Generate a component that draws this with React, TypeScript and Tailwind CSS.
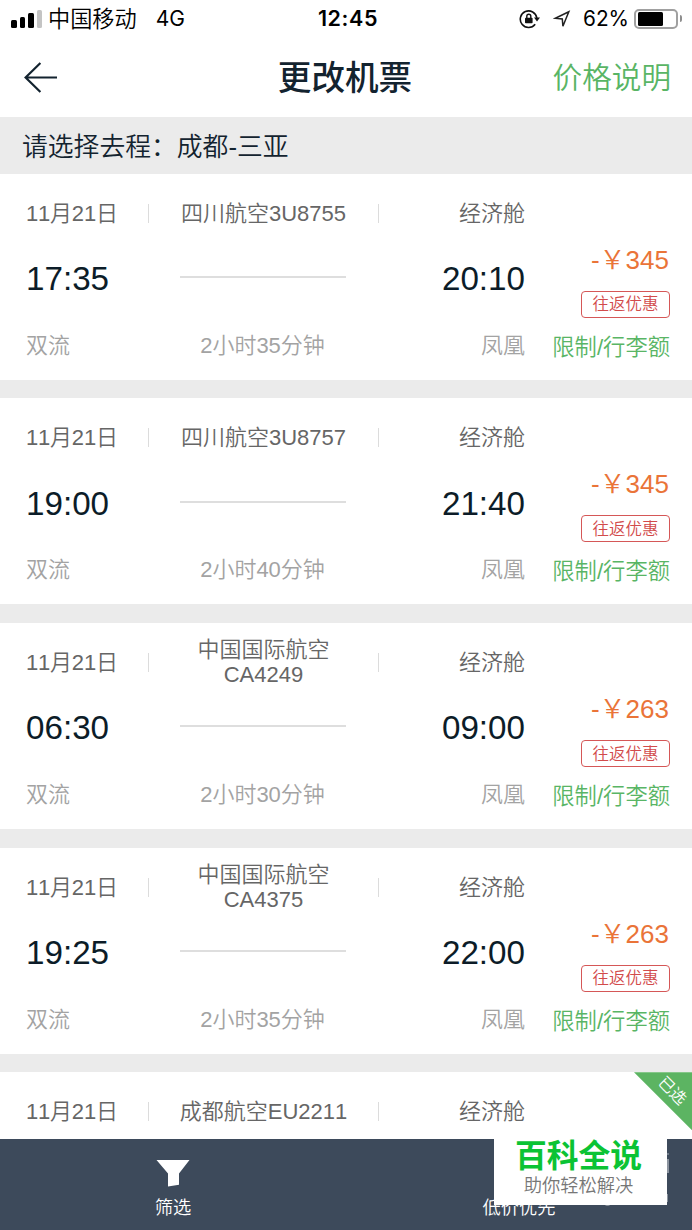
import React from "react";

interface Flight {
  airline: string;
  code: string;
  stacked?: boolean;
  depart?: string;
  arrive?: string;
  duration?: string;
  price?: string;
  selected?: boolean;
}

const flights: Flight[] = [
  { airline: "四川航空", code: "3U8755", depart: "17:35", arrive: "20:10", duration: "2小时35分钟", price: "345" },
  { airline: "四川航空", code: "3U8757", depart: "19:00", arrive: "21:40", duration: "2小时40分钟", price: "345" },
  { airline: "中国国际航空", code: "CA4249", stacked: true, depart: "06:30", arrive: "09:00", duration: "2小时30分钟", price: "263" },
  { airline: "中国国际航空", code: "CA4375", stacked: true, depart: "19:25", arrive: "22:00", duration: "2小时35分钟", price: "263" },
  { airline: "成都航空", code: "EU2211", selected: true },
];

const StatusBar: React.FC = () => (
  <div className="flex h-[38px] items-center justify-between pl-[11px] pr-[10px] text-[22px] text-black">
    <div className="flex w-[260px] items-center">
      <div className="flex items-end gap-[3px]">
        <span className="h-2 w-[5.5px] rounded-[1.5px] bg-black" />
        <span className="h-[11px] w-[5.5px] rounded-[1.5px] bg-black" />
        <span className="h-[14.5px] w-[5.5px] rounded-[1.5px] bg-black" />
        <span className="h-[18px] w-[5.5px] rounded-[1.5px] bg-[#c4c4c4]" />
      </div>
      <span className="ml-[6px] pt-[3px] text-[22.2px] font-[350] leading-none">中国移动</span>
      <span className="ml-[19px] font-['Inter'] text-[21px] leading-none">4G</span>
    </div>
    <span className="ml-[3px] font-['Inter'] text-[21.5px] font-semibold leading-none tracking-[0.6px]">12:45</span>
    <div className="flex w-[260px] items-center justify-end">
      {/* Rotation lock */}
      <svg width="22" height="20" viewBox="0 0 22 20" fill="none" stroke="#111" strokeWidth="1.6">
        <path d="M16.2 15.2A8.3 8.3 0 1 1 17.8 9" />
        <path d="M15 8.6h6l-3 3.8z" fill="#111" stroke="none" />
        <rect x="6" y="8.8" width="7.6" height="5.4" rx=".8" fill="#111" stroke="none" />
        <path d="M7.8 9.4V7.3a2 2 0 0 1 4 0v2.1" strokeWidth="1.4" />
      </svg>
      {/* Location */}
      <svg className="ml-3" width="18" height="18" viewBox="0 0 18 18" fill="none" stroke="#222" strokeWidth="1.5" strokeLinejoin="miter">
        <path d="M15.8 1.8 2.4 8.2l6.9.7.6 7.3z" />
      </svg>
      <span className="ml-3 font-['Inter'] text-[20.8px] leading-none">62%</span>
      <div className="ml-[5px] flex items-center gap-[1.5px]">
        <div className="flex h-[20.5px] w-[44px] rounded-[5px] border-2 border-[#a0a0a0] p-[1.5px]">
          <div className="w-[25px] rounded-[1.5px] bg-black" />
        </div>
        <div className="h-[7px] w-[2.5px] rounded-r-full bg-[#8e8e8e]" />
      </div>
    </div>
  </div>
);

const Header: React.FC = () => (
  <div className="flex h-[79px] items-center justify-between pl-6 pr-5 text-[#13232f]">
    <div className="w-[174px]">
      <svg width="34" height="32" viewBox="0 0 34 32" fill="none" stroke="#13232f" strokeWidth="2.2">
        <path d="M33 15.5H2M16.4 1 1.6 15.5 16.4 30" />
      </svg>
    </div>
    <h1 className="pt-[3px] text-[33.6px] font-medium leading-none">更改机票</h1>
    <span className="w-[180px] pr-px text-right text-[29.6px] font-[350] leading-none text-[#59b565]">价格说明</span>
  </div>
);

const FlightCard: React.FC<{ flight: Flight }> = ({ flight }) => (
  <div className="relative flex h-[206.2px] shrink-0 bg-white pl-[26px] font-[350]">
    {/* Trip details */}
    <div className="w-[499px]">
      <div className="flex h-[79px] items-center text-[22px] text-[#666]">
        <span className="w-[122px] tracking-[-0.2px]">11月21日</span>
        <span className="h-[19px] w-px bg-[#dcdcdc]" />
        <span className="w-[229px] text-center leading-[25px]">
          {flight.airline}
          {flight.stacked && <br />}
          {flight.code}
        </span>
        <span className="h-[19px] w-px bg-[#dcdcdc]" />
        <span className="flex-1 text-right">经济舱</span>
      </div>
      {flight.depart && (
        <div className="flex h-[52px] items-center justify-between text-[33.2px] leading-none text-[#0c1c28]">
          <span className="w-[154px]">{flight.depart}</span>
          <span className="mb-[3px] h-[2px] w-[166px] bg-[#dedede]" />
          <span className="w-[179px] text-right">{flight.arrive}</span>
        </div>
      )}
      {flight.duration && (
        <div className="flex h-[82px] items-center text-[22px] leading-none text-[#a3a3a3]">
          <span className="w-[122px]">双流</span>
          <span className="w-[229px] text-center">{flight.duration}</span>
          <span className="flex-1 text-right">凤凰</span>
        </div>
      )}
    </div>
    {/* Price */}
    {flight.price && (
      <div className="flex w-[145px] flex-col items-end pt-[69px]">
        <span className="h-[34px] whitespace-nowrap pr-px text-[26px] leading-[34px] text-[#ea7438]">-￥{flight.price}</span>
        <span className="mt-[14px] flex h-[27px] w-[89px] items-center justify-center rounded-[4px] border border-[#d55757] pt-px text-[16.5px] leading-none text-[#d24b4b]">
          往返优惠
        </span>
        <span className="mt-[14px] whitespace-nowrap text-[22.3px] leading-[32px] text-[#59b565]">限制/行李额</span>
      </div>
    )}
    {flight.selected && (
      <div className="absolute right-0 top-0 h-[58px] w-[58px] bg-[#5cb462] [clip-path:polygon(0_0,100%_0,100%_100%)]">
        <span className="absolute left-[22px] top-[11px] rotate-45 whitespace-nowrap text-[16px] leading-none text-white">已选</span>
      </div>
    )}
  </div>
);

const BottomBar: React.FC = () => (
  <div className="relative flex h-[91px] shrink-0 bg-[#3d4a5b] text-[18.3px] leading-none text-white">
    <div className="flex w-1/2 flex-col items-center pt-[21px]">
      <svg width="34" height="27" viewBox="0 0 34 27" fill="#fff">
        <path d="M.5 0h33L23 13.5v11.3L12 26.5v-13z" />
      </svg>
      <span className="mt-[12px] font-[350]">筛选</span>
    </div>
    <div className="flex w-1/2 flex-col items-center pt-[60px]">
      <span className="font-[350]">低价优先</span>
    </div>
    {/* Brand plate over the bar */}
    <span className="absolute left-[603px] top-[58px] h-[9px] w-[9px] rounded-full border-[1.5px] border-[#a2a9b1]" />
    <span className="absolute left-[663px] top-[14px] h-[1.5px] w-[6px] bg-[#6f7a88]" />
    <span className="absolute left-[667px] top-[20px] h-[14px] w-[1.5px] bg-[#8b939e]" />
    <span className="absolute left-[666px] top-[55px] h-[8px] w-[2px] bg-[#8b939e]" />
    <div className="absolute left-[494px] top-0 flex h-[66px] w-[173px] flex-col items-center bg-white">
      <span className="mr-[4px] mt-[1px] text-[31.8px] font-bold leading-[33px] text-[#0bc334]">百科全说</span>
      <span className="mr-[4px] mt-[3px] text-[18.3px] font-[350] leading-[19px] text-[#777]">助你轻松解决</span>
    </div>
  </div>
);

const App: React.FC = () => (
  <div className="flex h-[1230px] w-[692px] flex-col overflow-hidden bg-white font-['Liberation_Sans','Noto_Sans_CJK_SC',sans-serif] [font-kerning:none]">
    <StatusBar />
    <Header />
    <div className="h-[56.5px] shrink-0 bg-[#ebebeb] pl-[22px] text-[25.8px] font-[350] leading-[61px] text-[#13232f]">
      请选择去程：成都-三亚
    </div>
    <div className="flex min-h-0 flex-1 flex-col gap-[18.5px] overflow-hidden bg-[#ebebeb]">
      {flights.map((flight) => (
        <FlightCard key={flight.code} flight={flight} />
      ))}
    </div>
    <BottomBar />
  </div>
);

export default App;
